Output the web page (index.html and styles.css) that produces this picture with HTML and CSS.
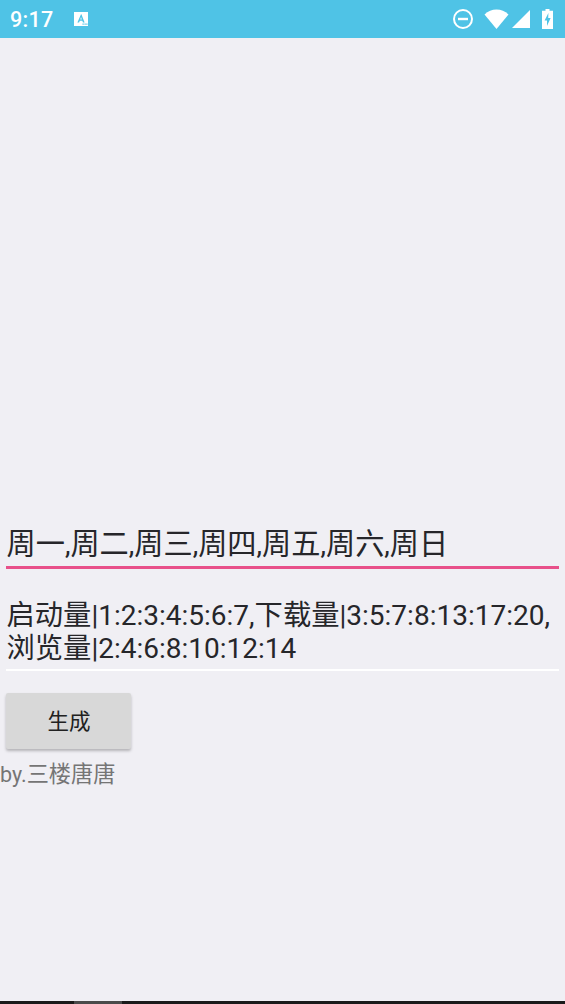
FILE: index.html
```html
<!DOCTYPE html>
<html lang="zh-CN">
<head>
<meta charset="utf-8">
<title>生成</title>
<link rel="stylesheet" href="styles.css">
</head>
<body>
<div class="screen">
  <header class="status">
    <span class="time">9:17</span>
    <svg class="icon-a" viewBox="0 0 16 16"><path fill="#fff" d="M1 1h14v14H1z"/><path fill="#4fc3e6" d="M8 3.200 4.400 11.500h1.700l.7-1.800h2.500l.7 1.800h1.600L8.400 3.200zM7.300 8.400 8 6l.8 2.400z"/><path fill="#4fc3e6" d="M9.500 12.500h1.200v1.200H9.500zM11.500 12.500h1.200v1.200h-1.200zM13.300 12.500h1.200v1.200h-1.200z"/></svg>
    <span class="spacer"></span>
    <svg class="icon-dnd" viewBox="0 0 22 22"><circle cx="11" cy="11" r="9" fill="none" stroke="#fff" stroke-width="2"/><path fill="#fff" d="M6 9.800h10v2.400H6z"/></svg>
    <svg class="icon-wifi" viewBox="0 0 25 20"><path fill="#fff" d="M12.500 20 0.500 5.600C4 2.200 8 .5 12.500 .5S21 2.200 24.500 5.600z"/></svg>
    <svg class="icon-signal" viewBox="0 0 18 18"><path fill="#fff" d="M18 0v18H0z"/></svg>
    <svg class="icon-batt" viewBox="0 0 11 20"><path fill="#fff" d="M3.500 0h4v1.800H11V20H0V1.800h3.500z"/><path fill="#4fc3e6" d="M6.400 4 2.600 11.500h2.400v5.500L8.600 9H6.200z"/></svg>
  </header>
  <main class="content">
    <div class="field active"><div class="value"><span class="cjk">周一</span>,<span class="cjk">周二</span>,<span class="cjk">周三</span>,<span class="cjk">周四</span>,<span class="cjk">周五</span>,<span class="cjk">周六</span>,<span class="cjk">周日</span></div></div>
    <div class="field multi"><div class="value"><span class="cjk">启动量</span>|1:2:3:4:5:6:7,<span class="cjk">下载量</span>|3:5:7:8:13:17:20,<br><span class="cjk">浏览量</span>|2:4:6:8:10:12:14</div></div>
    <button class="btn" type="button">生成</button>
    <p class="by">by.<span class="by-cjk">三楼唐唐</span></p>
  </main>
  <footer class="nav"><span class="nav-handle"></span></footer>
</div>
</body>
</html>
```
FILE: styles.css
```css
* { box-sizing: border-box; }
html, body { margin: 0; padding: 0; }
body { font-family: Roboto, "Noto Sans CJK SC", sans-serif; background: #f0eff4; }
.screen { width: 565px; height: 1004px; display: flex; flex-direction: column; overflow: hidden; }
.status { height: 38px; background: #4fc3e6; display: flex; align-items: center; padding: 0 12px 0 10px; color: #fff; flex: none; }
.time { font-size: 21.5px; font-weight: 500; letter-spacing: .3px; }
.icon-a { width: 16px; height: 16px; margin-left: 19px; margin-top: -1px; }
.spacer { flex: 1; }
.icon-dnd { width: 22px; height: 22px; margin-right: 10px; }
.icon-wifi { width: 25px; height: 20px; margin-right: 3px; margin-top: -1px; }
.icon-signal { width: 18px; height: 18px; margin-right: 12px; }
.icon-batt { width: 11px; height: 20px; margin-top: -1px; }
.content { flex: 1; padding-top: 488px; display: flex; flex-direction: column; align-items: flex-start; }
.field { margin: 0 6px; width: 553px; padding-left: .5px; color: #26262a; font-size: 28px; white-space: nowrap; }
.active { height: 43px; padding-top: 1px; line-height: 34px; border-bottom: 3px solid #e8508a; }
.active .cjk { font-size: 29.2px; }
.multi { margin-top: 29px; height: 73px; padding-top: 1px; line-height: 33px; border-bottom: 2px solid #fff; }
.multi .cjk { font-size: 28.3px; }
.btn { margin: 22px 0 0 6px; width: 125px; height: 56px; padding: 0 0 4px 1px; border: 0; border-radius: 2px; background: #d8d8d8; color: #212121; font: 21.5px Roboto, "Noto Sans CJK SC", sans-serif; box-shadow: 0 2px 3px rgba(0,0,0,.25); }
.by { margin: 11px 0 0; font-size: 21.5px; line-height: 28px; color: #757575; }
.by-cjk { font-size: 22.2px; }
.nav { height: 3px; background: #1a1a1a; flex: none; margin-top: auto; position: relative; }
.nav-handle { position: absolute; left: 74px; top: 0; width: 48px; height: 3px; background: #4a4a4a; }
```
